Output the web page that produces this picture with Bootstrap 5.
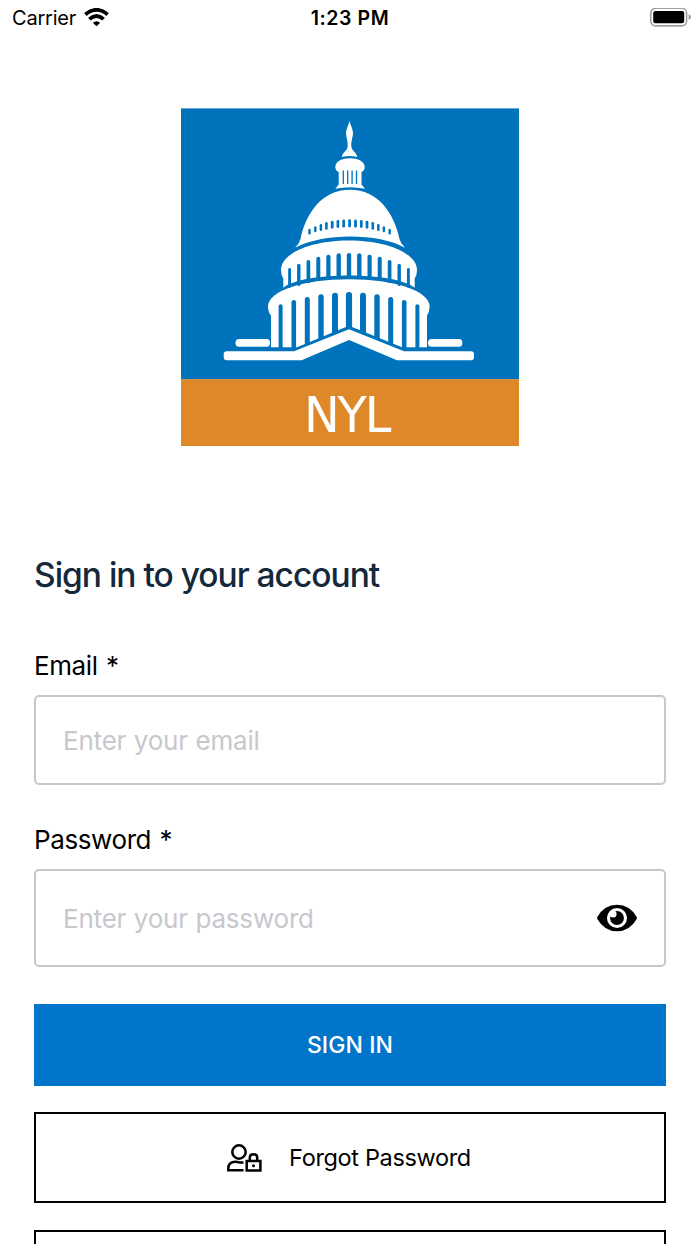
<!DOCTYPE html>
<html lang="en">
  <head>
    <meta charset="UTF-8" />
    <meta name="viewport" content="width=device-width, initial-scale=1" />
    <title>Sign in</title>
    <!-- Bootstrap 5 CDN -->
    <link
      href="https://cdn.jsdelivr.net/npm/bootstrap@5.3.3/dist/css/bootstrap.min.css"
      rel="stylesheet"
    />
    <style>
      body {
        font-family: Inter, "Liberation Sans", sans-serif;
        color: #000;
        height: 1244px;
        overflow: hidden;
      }
      .status-bar {
        height: 36px;
        padding: 0 9px;
        font-size: 20px;
        line-height: 36px;
      }
      .status-carrier {
        margin-left: 3px;
        letter-spacing: -0.2px;
      }
      .status-time {
        font-weight: 600;
        font-size: 19.5px;
        letter-spacing: 0.6px;
      }
      .logo {
        margin-top: 72px;
      }
      .login-form {
        padding: 0 34px;
        margin-top: 105px;
      }
      .login-title {
        font-size: 33.5px;
        line-height: 49px;
        letter-spacing: -1px;
        color: #13293b;
        margin-bottom: 49px;
      }
      .form-label {
        display: block;
        font-size: 26px;
        line-height: 34px;
        letter-spacing: -0.4px;
        word-spacing: 1.4px;
        margin-bottom: 12px;
      }
      .login-field {
        border: 2px solid #c7c7c7;
        border-radius: 5px;
      }
      .login-field .form-control {
        font-size: 26px;
        letter-spacing: -0.2px;
        word-spacing: 0.5px;
        padding: 0 27px;
        background: transparent;
      }
      .login-field .form-control::placeholder {
        color: #c7c7cd;
      }
      .email-field {
        height: 90px;
        margin-bottom: 38px;
      }
      .password-field {
        height: 98px;
        margin-bottom: 37px;
      }
      .btn-eye {
        padding: 0 27px 0 0;
      }
      .btn-signin {
        height: 82px;
        background: #0075c9;
        color: #fff;
        font-size: 23px;
        font-weight: 550;
        letter-spacing: 0.1px;
        margin-bottom: 26px;
      }
      .btn-line {
        height: 91px;
        border: 2px solid #000;
        color: #000;
        font-size: 23.5px;
        letter-spacing: -0.35px;
        margin-bottom: 27px;
      }
      .btn-cut {
        height: 14px;
        padding: 0;
        margin-bottom: 0;
        border-bottom: 0;
      }
      .forgot-icon {
        margin-left: -2px;
      }
      .forgot-text {
        margin-left: 27px;
      }
    </style>
  </head>
  <body class="bg-white">
    <!-- Status bar -->
    <div class="status-bar row g-0 align-items-center">
      <div class="col d-flex align-items-center gap-2">
        <span class="status-carrier">Carrier</span>
        <svg width="25" height="20" viewBox="0 0 26 20" fill="none" stroke="#000" stroke-width="4">
          <path d="M1.4 6.3Q13 -3.2 24.6 6.3" />
          <path d="M5.6 11.2Q13 4.8 20.4 11.2" />
          <path d="M9.200 15Q13 11.500 16.800 15L13 18.700z" fill="#000" stroke="none" />
        </svg>
      </div>
      <div class="col-auto status-time">1:23 PM</div>
      <div class="col d-flex justify-content-end">
        <svg width="41" height="20" viewBox="0 0 41 20">
          <rect x="0.8" y="0.3" width="35.8" height="17.6" rx="4.8" fill="none" stroke="#a0a0a0" stroke-width="1.6" />
          <rect x="3.2" y="3" width="31" height="12.3" rx="2.3" />
          <path d="M38.7 6v6q2.3-.8 2.3-3t-2.3-3z" fill="#999" />
        </svg>
      </div>
    </div>

    <!-- Logo -->
    <div class="logo d-flex justify-content-center">
      <svg width="338" height="338" viewBox="181 108 338 338">
        <rect x="181" y="108.4" width="338" height="271" fill="#0173bc" />
        <rect x="181" y="379.2" width="338" height="66.8" fill="#df8829" />
        <g fill="#fff">
          <path d="M349.5 121C350.3 125 353 129 353 133C353 137 350.8 141 351.4 147C352 151 356 151.5 357.3 157Q349.5 155 341.7 157C343 151.5 347 151 347.6 147C348.2 141 346 137 346 133C346 129 348.7 125 349.5 121z" />
          <path d="M335.3 167C335.5 161 342 158.2 350 158.2S364.5 161 364.7 167Q364.5 171 361.5 172V184.5L365 188.8Q350 185.5 335.3 188.8L338.7 184.5V172Q335.5 171 335.3 167z" />
          <path d="M295.3 247.8Q299.5 243.5 300.5 239C306 213 322 189.8 350 189.8S394 213 399.5 239Q400.5 243.5 405 247.8C379 233 323 232.5 295.3 247.8z" />
          <path d="M281 270C281 254 309 240.4 349 240.4S417 254 417 270Q417 275 414.7 278.5V287.8C395 271.5 303 271.5 283.3 287.8V278.5Q281 275 281 270z" />
          <path d="M268 306.5C268 291 303 279.2 349 279.2S429.7 291 429.7 306.5Q429.5 312 427 315.5V347.2H402L349 325.7L297 347.2H271V315.5Q268 312 268 306.5z" />
          <rect x="235.5" y="339" width="34.5" height="7.7" rx="3.5" />
          <rect x="428" y="339" width="34.3" height="7.7" rx="3.5" />
        </g>
        <!-- lantern openings -->
        <path d="M343.3 170.5v13.500M347.700 170.500v13.500M352.100 170.500v13.500M356.500 170.500v13.500" stroke="#0173bc" stroke-width="1.3" />
        <!-- columns, filled in by the script -->
        <g id="columns" stroke="#0173bc" stroke-linecap="round"></g>
        <!-- steps -->
        <path fill="#fff" d="M227 351.2H294L349 329.3L404 351.2H471Q474 351.2 474 354V357Q474 360.2 471 360.2H397L349 340L301.5 360.2H227Q223.7 360.2 223.7 357V354Q223.7 351.2 227 351.2z" />
        <text x="0 34.8 63.400" y="0" transform="translate(304 432) scale(.96 1)" font-family="'DejaVu Sans', sans-serif" font-size="49.8" fill="#fff">NYL</text>
      </svg>
    </div>

    <!-- Login form -->
    <form class="login-form">
      <h1 class="login-title fw-medium">Sign in to your account</h1>

      <label for="email" class="form-label">Email *</label>
      <div class="login-field email-field d-flex">
        <input id="email" type="email" class="form-control border-0" placeholder="Enter your email" />
      </div>

      <label for="password" class="form-label">Password *</label>
      <div class="login-field password-field d-flex align-items-stretch">
        <input id="password" type="password" class="form-control border-0" placeholder="Enter your password" />
        <button id="btnEye" type="button" class="btn btn-eye border-0" aria-label="Show password">
          <svg class="d-block" width="40" height="28" viewBox="0 0 41 28">
            <path d="M.3 13Q7.5 .4 20.5 .4T40.7 13Q41 14 40.7 15Q33.5 27.6 20.5 27.6T.3 15Q0 14 .3 13z" />
            <circle cx="20.5" cy="14" r="8.7" stroke="#fff" stroke-width="3.2" />
            <circle cx="16.5" cy="10" r="3.6" fill="#fff" />
          </svg>
        </button>
      </div>

      <button type="button" class="btn btn-signin rounded-0 border-0 w-100">SIGN IN</button>
      <button type="button" class="btn btn-line rounded-0 w-100 d-flex align-items-center justify-content-center">
        <svg class="forgot-icon" width="35" height="28" viewBox="0 0 35 28" fill="none" stroke="#000" stroke-width="2.5">
          <circle cx="12" cy="8" r="6.7" />
          <path d="M16.5 18.4Q14 18.6 12 18.2C7 16.7 1.3 18.5 1.3 24V26.3H16.5" />
          <rect x="19.7" y="17" width="13.7" height="9.5" />
          <path d="M22.8 17V13.5Q22.8 10.3 26.5 10.3T30.2 13.5V17" />
          <circle cx="26.5" cy="21.7" r="1.5" fill="#000" stroke="none" />
        </svg>
        <span class="forgot-text">Forgot Password</span>
      </button>
      <button type="button" class="btn btn-line btn-cut rounded-0 w-100 d-block"></button>
    </form>

    <script src="https://cdn.jsdelivr.net/npm/bootstrap@5.3.3/dist/js/bootstrap.bundle.min.js"></script>
    <script>
      const columns = document.getElementById("columns");

      // Draws one blue opening of the dome
      function addColumn(x, top, bottom, width) {
        const line = document.createElementNS("http://www.w3.org/2000/svg", "line");
        line.setAttribute("x1", x);
        line.setAttribute("x2", x);
        line.setAttribute("y1", top + width / 2);
        line.setAttribute("y2", bottom - width / 2);
        line.setAttribute("stroke-width", width);
        columns.appendChild(line);
      }

      // [distance from the centre, top, bottom, width], mirrored on both sides
      const domeWindows = [
        [0, 219.3, 227.5, 2.8], [5.9, 219.6, 227.6, 2.8], [11.7, 220, 227.9, 2.7],
        [17.4, 220.8, 228.7, 2.7], [23.2, 222, 229.7, 2.6], [28.7, 224, 231, 2.5],
        [34.3, 226.2, 232.3, 2.4], [40.1, 228.7, 234.5, 2.4],
      ];
      const middleTier = [
        [0, 253, 279, 4.4], [10.3, 253.3, 279, 4.4], [20.6, 254.7, 280, 4.2],
        [30.7, 256.8, 281, 4], [40.6, 260, 283, 3.7], [50.2, 263.7, 286, 3.4],
        [59.4, 268, 288, 2.9],
      ];
      const lowerTier = [
        [0, 292, 334, 6.2], [14, 292.8, 339, 6], [28, 294.3, 345, 5.4],
        [41.7, 297, 351, 5], [55.2, 300, 352, 4.6], [68.4, 304.3, 352, 4],
      ];

      function drawRow(center, row) {
        row.forEach(([dx, top, bottom, width]) => {
          addColumn(center + dx, top, bottom, width);
          if (dx) addColumn(center - dx, top, bottom, width);
        });
      }

      drawRow(349.6, domeWindows);
      drawRow(349, middleTier);
      drawRow(349, lowerTier);

      // Show / hide password
      document.getElementById("btnEye").addEventListener("click", () => {
        const input = document.getElementById("password");
        input.type = input.type === "password" ? "text" : "password";
      });
    </script>
  </body>
</html>
